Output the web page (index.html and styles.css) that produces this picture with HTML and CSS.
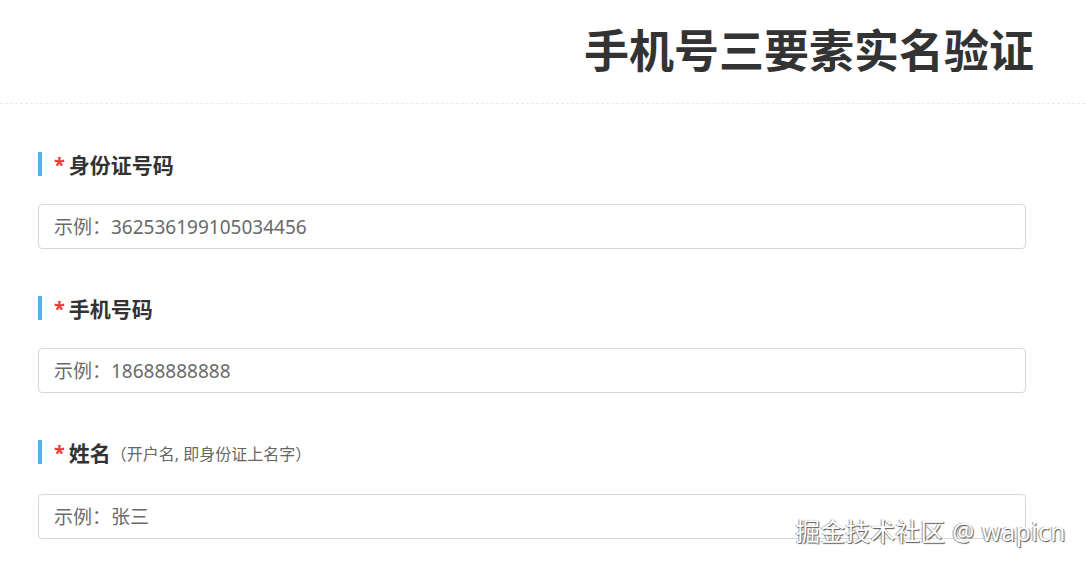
FILE: index.html
```html
<!DOCTYPE html>
<html lang="zh-CN">
  <head>
    <meta charset="UTF-8" />
    <meta name="viewport" content="width=device-width, initial-scale=1.0" />
    <title>手机号三要素实名验证</title>
    <link rel="stylesheet" href="styles.css">
  </head>
  <body>
    <div class="header">
      <h1>手机号三要素实名验证</h1>
    </div>

    <form class="verify-form" id="verifyForm">
      <div class="field">
        <label for="idCard"><span class="req">*</span> 身份证号码</label>
        <input type="text" id="idCard" name="idCard" placeholder="示例：362536199105034456" />
      </div>

      <div class="field">
        <label for="mobile"><span class="req">*</span> 手机号码</label>
        <input type="text" id="mobile" name="mobile" placeholder="示例：18688888888" />
      </div>

      <div class="field">
        <label for="name" class="with-hint"><span class="req">*</span> 姓名<span class="hint">（开户名, 即身份证上名字）</span></label>
        <input type="text" id="name" name="name" placeholder="示例：张三" />
      </div>
    </form>

    <div class="watermark">掘金技术社区 @ wapicn</div>
  </body>
</html>
```

FILE: styles.css
```css
body {
  font-family: "Noto Sans", "Noto Sans CJK SC", sans-serif;
  background-color: #fff;
  margin: 0;
  color: #333;
}
.header {
  height: 103px;
  border-bottom: 1px dashed #ececec;
  display: flex;
  align-items: center;
  justify-content: flex-end;
  padding-right: 51px;
}
.header h1 {
  margin: 0;
  font-size: 45px;
  font-weight: bold;
  color: #333;
  line-height: 1;
  padding-bottom: 2px;
}
.verify-form {
  padding: 48px 59px 0 38px;
}
.field {
  margin-bottom: 47px;
}
label {
  display: flex;
  align-items: center;
  height: 24px;
  border-left: 4px solid #4cb3ee;
  padding-left: 12px;
  font-size: 21px;
  font-weight: bold;
  color: #333;
  margin-bottom: 28px;
}
label.with-hint {
  margin-bottom: 30px;
}
.req {
  color: #ee3a3a;
  margin-right: 4px;
  font-size: 20px;
}
.hint {
  font-size: 16px;
  font-weight: normal;
  color: #666;
  padding-top: 2px;
}
input {
  display: block;
  width: 100%;
  height: 45px;
  padding: 0 15px;
  border: 1px solid #d6d6d6;
  border-radius: 4px;
  font-family: "Noto Sans", "Noto Sans CJK SC", sans-serif;
  font-size: 19px;
  box-sizing: border-box;
  outline: none;
}
input::placeholder {
  color: #6a6a6a;
}
.watermark {
  position: absolute;
  right: 19px;
  top: 513px;
  font-size: 24.5px;
  color: #fff;
  text-shadow: 1px 1px 1px #555, -1px 0 1px #999;
  letter-spacing: 0.5px;
}
```
